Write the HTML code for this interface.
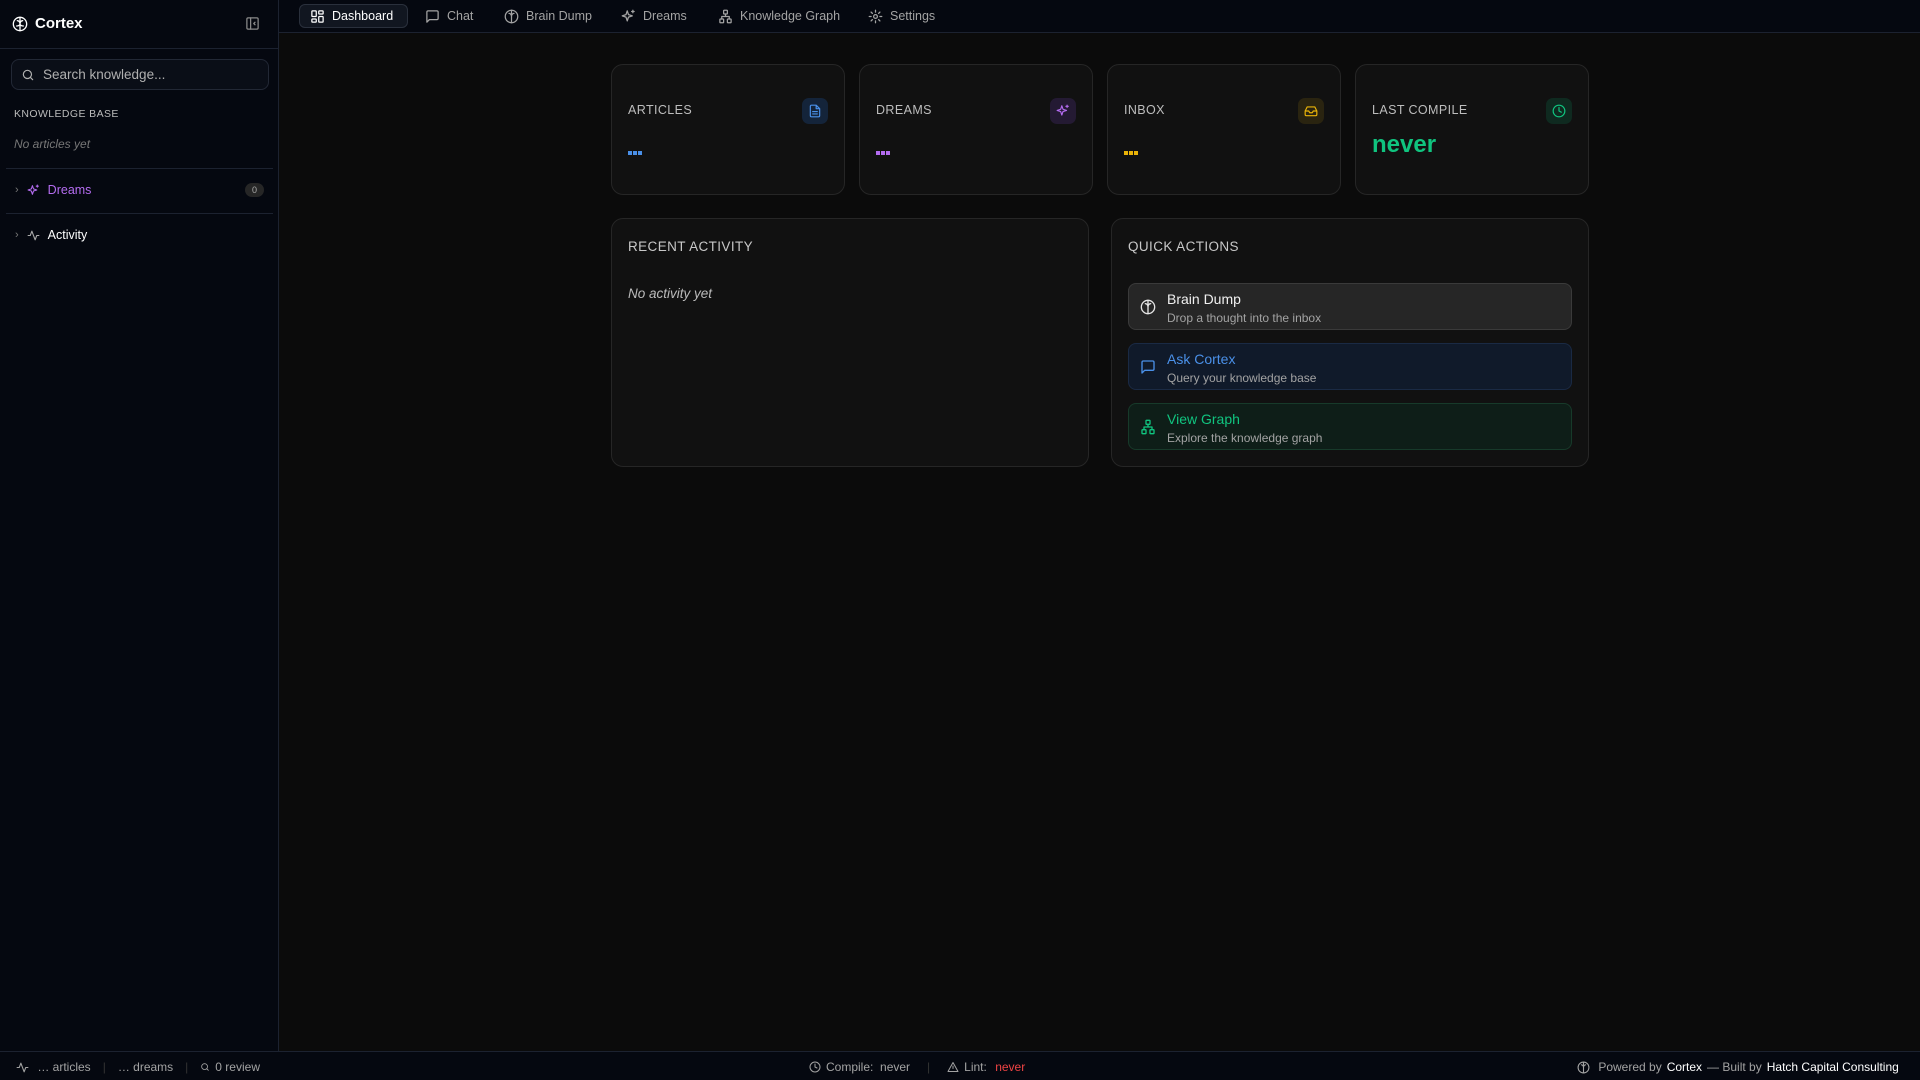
<!DOCTYPE html>
<html><head><meta charset="utf-8"><style>
*{box-sizing:border-box;margin:0;padding:0}
body{width:1920px;height:1080px;background:#0b0b0b;font-family:"Liberation Sans",sans-serif;color:#e5e5e5;position:relative;overflow:hidden}
.abs{position:absolute}
svg{fill:none;stroke:currentColor;stroke-width:2;stroke-linecap:round;stroke-linejoin:round}
#side{left:0;top:0;width:279px;height:1051px;background:#050810;border-right:1px solid #1c2230}
#top{left:279px;top:0;right:0;height:33px;background:#050810;border-bottom:1px solid #1c2230}
.tab{position:absolute;top:4px;height:24px;display:flex;align-items:center;gap:7px;font-size:12.5px;color:#a3a3a3;padding:0 10px}
.tab.on{background:#111620;border:1px solid #2a303c;border-radius:6px;color:#fff}
.card{position:absolute;background:#111;border:1px solid #262626;border-radius:12px}
.lbl{position:absolute;left:16px;top:38px;font-size:12.5px;color:#bdbdbd;letter-spacing:.4px}
.ib{position:absolute;right:16px;top:33px;width:26px;height:26px;border-radius:7px;display:flex;align-items:center;justify-content:center}
.dots{position:absolute;left:16px;top:86px;display:flex;gap:1px}
.dots i{width:4px;height:4px;display:block}
.qa{position:absolute;left:16px;right:16px;height:47px;border-radius:8px;border:1px solid #333}
.qa svg{position:absolute;left:11px;top:15px}
.qa b{position:absolute;left:38px;top:7px;font-weight:normal;font-size:14px}
.qa span{position:absolute;left:38px;top:27px;font-size:12px;color:#a3a3a3}
#foot{left:0;top:1051px;width:1920px;height:29px;background:#050810;border-top:1px solid #1c2230;font-size:12px;color:#a3a3a3}
#foot div{position:absolute;top:8px;display:flex;align-items:center;gap:5px}
</style></head><body>
<div id="side" class="abs">
 <div class="abs" style="left:12px;top:15px;display:flex;align-items:center;gap:7px;font-size:15px;font-weight:bold;color:#fff"><svg width="16" height="16" viewBox="0 0 24 24"><circle cx="12" cy="12" r="10"/><path d="M12 2v20M8 7c2 0 4 2 4 5M16 7c-2 0-4 2-4 5M7 15c2 0 5-1 5-3M17 15c-2 0-5-1-5-3"/></svg>Cortex</div>
 <svg class="abs" style="left:245px;top:16px;color:#8a8a8a" width="15" height="15" viewBox="0 0 24 24"><rect x="3" y="3" width="18" height="18" rx="2"/><path d="M9 3v18M16 10l-2 2 2 2"/></svg>
 <div class="abs" style="left:0;top:48px;width:279px;border-top:1px solid #1c2230"></div>
 <div class="abs" style="left:11px;top:59px;width:258px;height:31px;border:1px solid #222835;border-radius:8px;background:#0a0e17;display:flex;align-items:center;padding-left:9px;gap:8px;font-size:13.5px;color:#b0b0b0"><svg width="14" height="14" viewBox="0 0 24 24"><circle cx="11" cy="11" r="7"/><path d="M20 20l-4-4"/></svg>Search knowledge...</div>
 <div class="abs" style="left:14px;top:108px;font-size:10.5px;color:#bbb;letter-spacing:.4px">KNOWLEDGE BASE</div>
 <div class="abs" style="left:14px;top:137px;font-size:12px;color:#777;font-style:italic">No articles yet</div>
 <div class="abs" style="left:6px;top:168px;width:267px;border-top:1px solid #1c2230"></div>
 <div class="abs" style="left:15px;top:183px;display:flex;align-items:center;gap:8px;font-size:12.5px;color:#b46cf0"><span style="color:#777;font-size:11px">›</span><svg width="13" height="13" viewBox="0 0 24 24"><path d="M10 3l2 6 6 2-6 2-2 6-2-6-6-2 6-2zM19 2v4M17 4h4"/></svg>Dreams</div>
 <div class="abs" style="left:245px;top:183px;width:19px;height:14px;border-radius:7px;background:#262626;font-size:9px;color:#aaa;text-align:center;line-height:14px">0</div>
 <div class="abs" style="left:6px;top:213px;width:267px;border-top:1px solid #1c2230"></div>
 <div class="abs" style="left:15px;top:228px;display:flex;align-items:center;gap:8px;font-size:12.5px;color:#fff"><span style="color:#777;font-size:11px">›</span><svg width="13" height="13" viewBox="0 0 24 24" style="color:#aaa"><path d="M2 12h4l3-8 6 16 3-8h4"/></svg>Activity</div>
</div>
<div id="top" class="abs">
 <div class="tab on" style="left:20px;width:109px"><svg width="15" height="15" viewBox="0 0 24 24"><rect x="3" y="3" width="7" height="9" rx="1"/><rect x="14" y="3" width="7" height="5" rx="1"/><rect x="14" y="12" width="7" height="9" rx="1"/><rect x="3" y="16" width="7" height="5" rx="1"/></svg>Dashboard</div>
 <div class="tab" style="left:136px"><svg width="15" height="15" viewBox="0 0 24 24"><path d="M21 15a2 2 0 0 1-2 2H7l-4 4V5a2 2 0 0 1 2-2h14a2 2 0 0 1 2 2z"/></svg>Chat</div>
 <div class="tab" style="left:215px"><svg width="15" height="15" viewBox="0 0 24 24"><circle cx="12" cy="12" r="10"/><path d="M12 2v20M8 7c2 0 4 2 4 5M16 7c-2 0-4 2-4 5"/></svg>Brain Dump</div>
 <div class="tab" style="left:332px"><svg width="15" height="15" viewBox="0 0 24 24"><path d="M10 3l2 6 6 2-6 2-2 6-2-6-6-2 6-2zM19 2v4M17 4h4"/></svg>Dreams</div>
 <div class="tab" style="left:429px"><svg width="15" height="15" viewBox="0 0 24 24"><rect x="9" y="2" width="6" height="6" rx="1"/><rect x="3" y="16" width="6" height="6" rx="1"/><rect x="15" y="16" width="6" height="6" rx="1"/><path d="M12 8v4M6 16v-4h12v4"/></svg>Knowledge Graph</div>
 <div class="tab" style="left:579px"><svg width="15" height="15" viewBox="0 0 24 24"><circle cx="12" cy="12" r="3"/><path d="M12 2v3M12 19v3M2 12h3M19 12h3M4.9 4.9l2.1 2.1M17 17l2.1 2.1M4.9 19.1L7 17M17 7l2.1-2.1"/></svg>Settings</div>
</div>

<div class="card" style="left:611px;top:64px;width:234px;height:131px"><div class="lbl">ARTICLES</div><div class="ib" style="background:#14243a;color:#4a90e8"><svg width="14" height="14" viewBox="0 0 24 24"><path d="M14 2H6a2 2 0 0 0-2 2v16a2 2 0 0 0 2 2h12a2 2 0 0 0 2-2V8zM14 2v6h6M8 13h8M8 17h8"/></svg></div><div class="dots"><i style="background:#4a90e8"></i><i style="background:#4a90e8"></i><i style="background:#4a90e8"></i></div></div>
<div class="card" style="left:859px;top:64px;width:234px;height:131px"><div class="lbl">DREAMS</div><div class="ib" style="background:#241a33;color:#b46cf0"><svg width="14" height="14" viewBox="0 0 24 24"><path d="M10 3l2 6 6 2-6 2-2 6-2-6-6-2 6-2zM19 2v4M17 4h4"/></svg></div><div class="dots"><i style="background:#b46cf0"></i><i style="background:#b46cf0"></i><i style="background:#b46cf0"></i></div></div>
<div class="card" style="left:1107px;top:64px;width:234px;height:131px"><div class="lbl">INBOX</div><div class="ib" style="background:#2a2410;color:#eab308"><svg width="14" height="14" viewBox="0 0 24 24"><path d="M22 12h-6l-2 3h-4l-2-3H2M5.5 5h13L22 12v6a2 2 0 0 1-2 2H4a2 2 0 0 1-2-2v-6z"/></svg></div><div class="dots"><i style="background:#eab308"></i><i style="background:#eab308"></i><i style="background:#eab308"></i></div></div>
<div class="card" style="left:1355px;top:64px;width:234px;height:131px"><div class="lbl">LAST COMPILE</div><div class="ib" style="background:#0f2a20;color:#10c47f"><svg width="14" height="14" viewBox="0 0 24 24"><circle cx="12" cy="12" r="10"/><path d="M12 6v6l4 2"/></svg></div><div class="abs" style="left:16px;top:66px;font-size:24px;font-weight:bold;color:#10c47f">never</div></div>

<div class="card" style="left:611px;top:218px;width:478px;height:249px"><div class="abs" style="left:16px;top:20px;font-size:13.5px;color:#c8c8c8;letter-spacing:.4px">RECENT ACTIVITY</div><div class="abs" style="left:16px;top:67px;font-size:13.5px;color:#bbb;font-style:italic">No activity yet</div></div>
<div class="card" style="left:1111px;top:218px;width:478px;height:249px"><div class="abs" style="left:16px;top:20px;font-size:13.5px;color:#c8c8c8;letter-spacing:.4px">QUICK ACTIONS</div>
 <div class="qa" style="top:64px;background:#262626;border-color:#3a3a3a;color:#e5e5e5"><svg width="16" height="16" viewBox="0 0 24 24"><circle cx="12" cy="12" r="10"/><path d="M12 2v20M8 7c2 0 4 2 4 5M16 7c-2 0-4 2-4 5"/></svg><b style="color:#f0f0f0">Brain Dump</b><span>Drop a thought into the inbox</span></div>
 <div class="qa" style="top:124px;background:#101a2a;border-color:#1a2a44;color:#4a90e8"><svg width="16" height="16" viewBox="0 0 24 24"><path d="M21 15a2 2 0 0 1-2 2H7l-4 4V5a2 2 0 0 1 2-2h14a2 2 0 0 1 2 2z"/></svg><b>Ask Cortex</b><span>Query your knowledge base</span></div>
 <div class="qa" style="top:184px;background:#0e1e18;border-color:#173a2a;color:#10c47f"><svg width="16" height="16" viewBox="0 0 24 24"><rect x="9" y="2" width="6" height="6" rx="1"/><rect x="3" y="16" width="6" height="6" rx="1"/><rect x="15" y="16" width="6" height="6" rx="1"/><path d="M12 8v4M6 16v-4h12v4"/></svg><b>View Graph</b><span>Explore the knowledge graph</span></div>
</div>

<div id="foot" class="abs">
 <div style="left:16px"><svg width="13" height="13" viewBox="0 0 24 24"><path d="M2 12h4l3-8 6 16 3-8h4"/></svg>&nbsp;… articles<span style="color:#333;margin:0 7px">|</span>… dreams<span style="color:#333;margin:0 7px">|</span><svg width="10" height="10" viewBox="0 0 24 24"><circle cx="11" cy="11" r="7"/><path d="M20 20l-4-4"/></svg>0 review</div>
 <div style="left:809px"><svg width="12" height="12" viewBox="0 0 24 24"><circle cx="12" cy="12" r="10"/><path d="M12 6v6l4 2"/></svg>Compile:&nbsp; never<span style="color:#333;margin:0 12px">|</span><svg width="12" height="12" viewBox="0 0 24 24"><path d="M12 3L2 21h20zM12 10v5"/></svg>Lint:&nbsp; <span style="color:#ef4444">never</span></div>
 <div style="left:1577px"><svg width="13" height="13" viewBox="0 0 24 24"><circle cx="12" cy="12" r="10"/><path d="M12 2v20M8 7c2 0 4 2 4 5M16 7c-2 0-4 2-4 5"/></svg>&nbsp;Powered by <span style="color:#fff">Cortex</span> — Built by <span style="color:#fff">Hatch Capital Consulting</span></div>
</div>
</body></html>
